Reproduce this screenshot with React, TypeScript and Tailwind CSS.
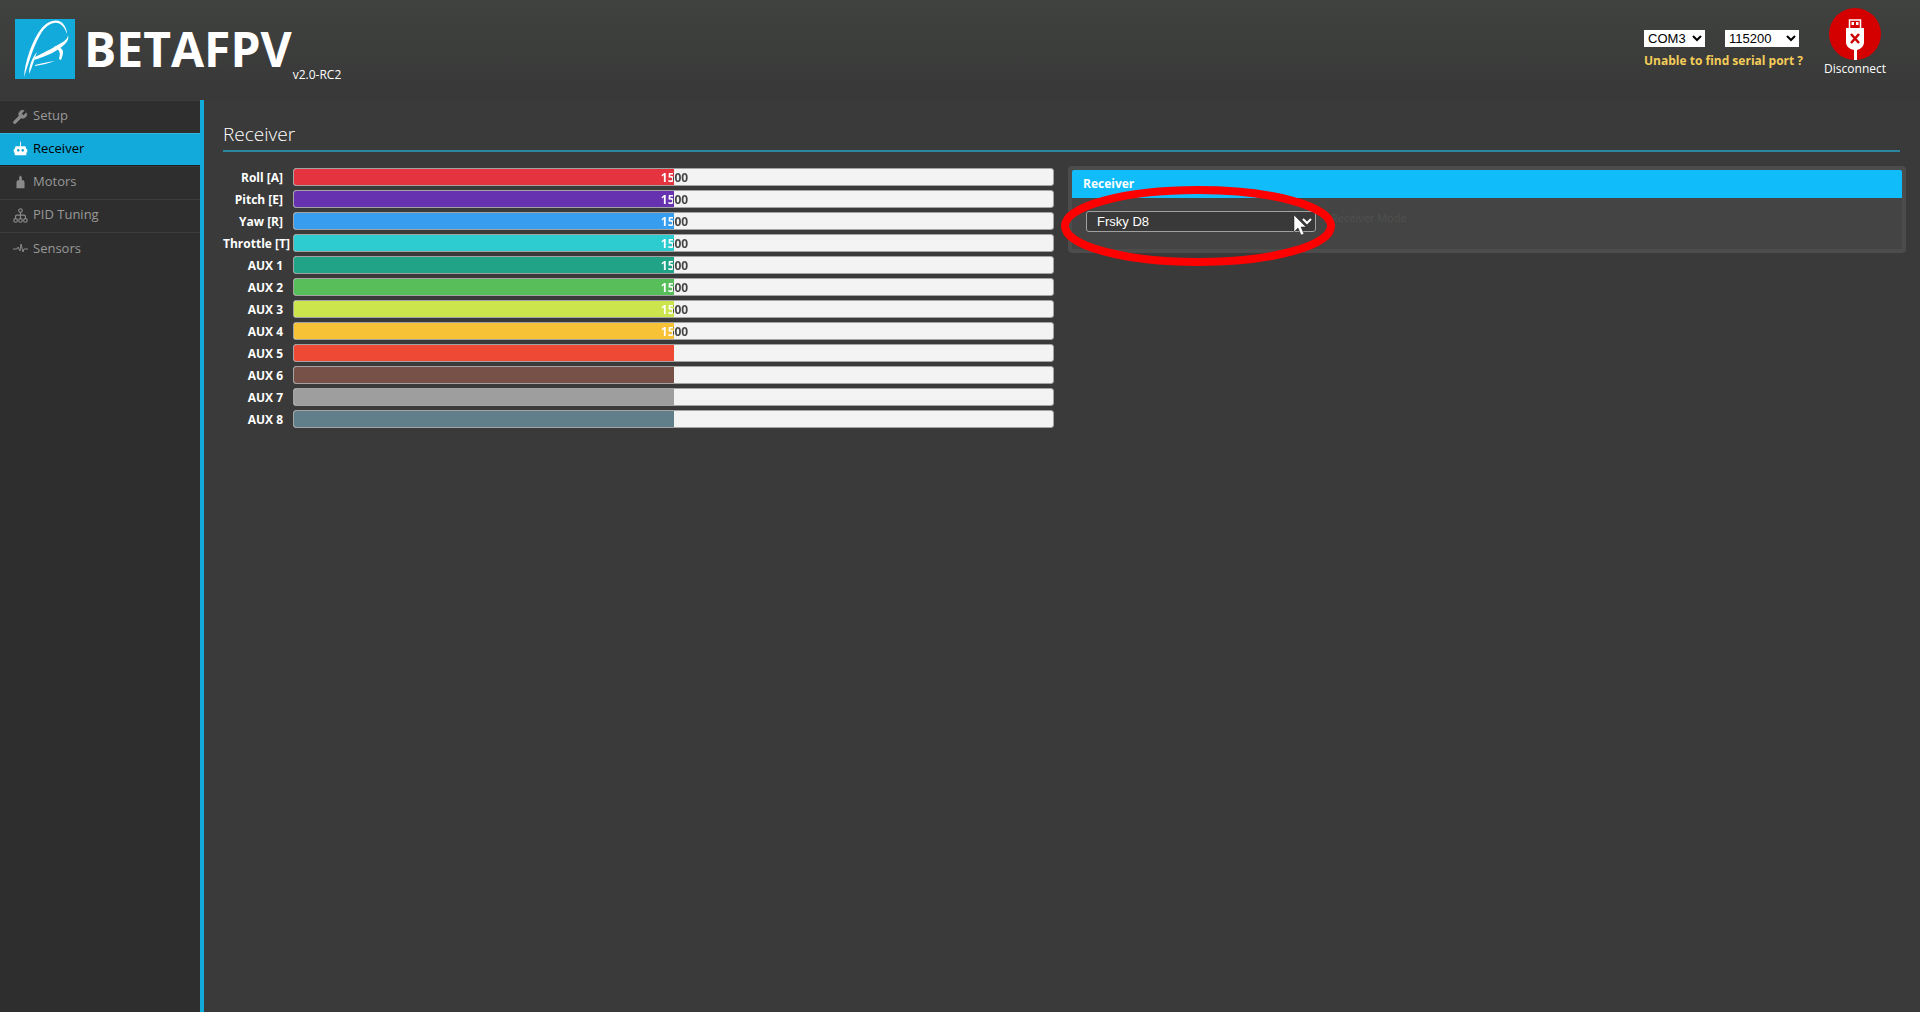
import type { ReactNode } from 'react'
import { Wrench } from 'lucide-react'

type TabProps = {
    label: string
    icon: ReactNode
    active?: boolean
}

const channels = [
    { name: 'Roll [A]', color: 'bg-[#e5343f]', value: 1500 },
    { name: 'Pitch [E]', color: 'bg-[#6732b0]', value: 1500 },
    { name: 'Yaw [R]', color: 'bg-[#379dee]', value: 1500 },
    { name: 'Throttle [T]', color: 'bg-[#2cccd0]', value: 1500 },
    { name: 'AUX 1', color: 'bg-[#20a386]', value: 1500 },
    { name: 'AUX 2', color: 'bg-[#58be59]', value: 1500 },
    { name: 'AUX 3', color: 'bg-[#cce54c]', value: 1500 },
    { name: 'AUX 4', color: 'bg-[#f7c235]', value: 1500 },
    { name: 'AUX 5', color: 'bg-[#ee4934]' },
    { name: 'AUX 6', color: 'bg-[#775147]' },
    { name: 'AUX 7', color: 'bg-[#9e9e9e]' },
    { name: 'AUX 8', color: 'bg-[#617f8b]' },
]

function Logo() {
    return (
        <svg className="size-[60px]" viewBox="0 0 60 60" fill="#fff">
            <rect width="60" height="60" fill="#12aadb" />
            <path d="M9 58C10 42 17 22 26 10 34 0 45-1 49 6c2 3 3 6 3 9-3-8-7-12-13-11-6 1-11 6-15 14-6 11-10 25-15 40z" />
            <path d="M53 16c1 3 0 6-3 9-7 7-18 12-31 16l1-3c11-5 21-11 28-15 4-3 5-5 5-7z" />
            <path d="M39 27c6 1 9 3 9 6 0 3-1 5-2 8l-2-1c1-4 1-6 0-8-1-2-3-3-5-5z" />
            <path d="M22 33c-3 7-4 14-8 22 0-8 3-16 8-22z" />
            <path d="M20 46c7-2 13-3 20-4-6 2-13 4-20 5z" />
        </svg>
    )
}

function Usb() {
    return (
        <svg className="size-[52px]" viewBox="0 0 52 52">
            <circle cx="26" cy="26" r="26" fill="#d40000" />
            <path d="M20.500 20v-8h11v8" fill="none" stroke="#fff" strokeWidth="1.500" />
            <path d="M22.500 14h2.500v3h-2.500zM27 14h2.500v3H27zM17 20h18v14c0 4-3 7-7 8v10h-3V42c-5-1-8-4-8-8z" fill="#fff" />
            <path d="M22 26l8 9M30 26l-8 9" stroke="#c00" strokeWidth="2.500" />
        </svg>
    )
}

function Tab({ label, icon, active }: TabProps) {
    return (
        <li>
            <a
                href="#"
                className={
                    active
                        ? 'flex items-center gap-1 h-[33px] pl-3 pb-[2px] border-y border-t-[#33b5df] border-b-[#1f1f1f] bg-[#12aadb] text-black text-[13px]'
                        : 'flex items-center gap-1 h-[33px] pl-3 pb-[2px] border-y border-t-[#3b3b3b] border-b-[#212121] last:border-b-0 text-[#999] text-[13px]'
                }
            >
                <svg className={active ? 'size-[17px] text-white' : 'size-[17px] text-[#8a8a8a]'} viewBox="-1 -1 19 19" fill="currentColor">
                    {icon}
                </svg>
                {label}
            </a>
        </li>
    )
}

function Channel({ name, color, value }: { name: string; color: string; value?: number }) {
    return (
        <li className="flex gap-[10px] h-[18px]">
            <span className="w-[60px] text-right whitespace-nowrap text-xs leading-5 font-bold text-white">{name}</span>
            <div className="relative flex-1 rounded-[3px] border border-[#a3a3a3] bg-[#f3f3f3] overflow-hidden">
                <div className={`w-1/2 h-full ${color}`}></div>
                {value && (
                    <span className="absolute inset-0 pl-[2px] text-center text-xs leading-[18px] font-bold text-transparent bg-clip-text bg-linear-to-r from-white from-50% to-[#444] to-50%">
                        {value}
                    </span>
                )}
            </div>
        </li>
    )
}

export default function App() {
    return (
        <div className="flex flex-col min-h-screen bg-[#393a39] font-['Open_Sans','Noto_Sans',sans-serif]">
            <header className="flex justify-between h-[100px] bg-linear-to-b from-[#404240] to-[#373837]">
                <div className="flex items-start pl-[15px] pt-[19px]">
                    <Logo />
                    <span className="ml-[9px] text-5xl leading-[60px] font-bold text-white">BETAFPV</span>
                    <span className="ml-px mt-12 text-xs text-white">v2.0-RC2</span>
                </div>
                <div className="flex gap-[21px] pr-[34px] pt-2">
                    <div className="pt-[22px]">
                        <div className="flex gap-5">
                            <select aria-label="Port" className="w-[61px] h-[17px] bg-white text-black text-[13px] leading-4 font-['Liberation_Sans',sans-serif]">
                                <option>COM3</option>
                            </select>
                            <select aria-label="Baud rate" className="w-[74px] h-[17px] bg-white text-black text-[13px] leading-4 font-['Liberation_Sans',sans-serif]">
                                <option>115200</option>
                            </select>
                        </div>
                        <a href="#" className="block mt-[6px] text-xs font-bold text-[#f5cd59]">Unable to find serial port ?</a>
                    </div>
                    <button className="flex flex-col items-center gap-px h-fit text-xs text-white">
                        <Usb />
                        Disconnect
                    </button>
                </div>
            </header>

            <div className="flex flex-1">
                <nav className="w-[204px] border-r-4 border-[#12aadb] bg-[#2e2e2e]">
                    <ul>
                        <Tab label="Setup" icon={<Wrench width="18" height="18" x="-1" y="0" fill="currentColor" strokeWidth="1" />} />
                        <Tab
                            label="Receiver"
                            active
                            icon={<path fillRule="evenodd" d="M8 1h1v5h5l1 3h1v4h-1v3H2v-3H1V9h1l1-3h5zM6 9a1.500 1.500 0 100 3 1.500 1.500 0 000-3zm5 0a1.500 1.500 0 100 3 1.500 1.500 0 000-3z" />}
                        />
                        <Tab label="Motors" icon={<path d="M8 1h1l1 2v3h2l1 2v7H4V8l1-2h2V3z" />} />
                        <Tab
                            label="PID Tuning"
                            icon={
                                <g fill="none" stroke="currentColor" strokeWidth="1.300">
                                    <circle cx="8.500" cy="3" r="2" />
                                    <circle cx="3" cy="14" r="2" />
                                    <circle cx="8.500" cy="14" r="2" />
                                    <circle cx="14" cy="14" r="2" />
                                    <path d="M8.500 5v7M3 12V9.500q0-1.500 1.500-1.500h8q1.500 0 1.500 1.500V12" />
                                </g>
                            }
                        />
                        <li>
                            <a href="#" className="flex items-center gap-1 h-8 pl-3 border-t border-[#3b3b3b] text-[#999] text-[13px]">
                                <svg className="size-[17px]" viewBox="0 0 17 17" fill="none" stroke="#8a8a8a">
                                    <path d="M1 9h4l1-2 2 4 1-7 2 8 1-3h4" />
                                </svg>
                                Sensors
                            </a>
                        </li>
                    </ul>
                </nav>

                <main className="flex-1 pl-[19px] pr-[14px] pt-5">
                    <h1 className="mr-[6px] h-8 border-b-2 border-[#2b86a1] text-[19px] leading-7 font-light text-white">Receiver</h1>
                    <div className="grid grid-cols-[831fr_838fr] items-start gap-[14px] pt-[14px]">
                        <ul className="flex flex-col gap-1 pt-[2px]">
                            {channels.map((channel) => (
                                <Channel key={channel.name} {...channel} />
                            ))}
                        </ul>

                        <section className="rounded border-4 border-[#4b4c4b] bg-[#434443]">
                            <h2 className="h-7 pl-[11px] rounded-t-xs bg-[#11bcfb] text-xs leading-7 font-bold text-white">Receiver</h2>
                            <div className="relative flex items-start h-[51px] pl-[14px] pt-[13px]">
                                <select
                                    id="receiver-mode"
                                    className="w-[230px] h-[21px] pl-[6px] rounded-[3px] border border-[#a0a0a0] bg-[#393939] text-white text-[13px] leading-4 font-['Liberation_Sans',sans-serif]"
                                >
                                    <option>Frsky D8</option>
                                </select>
                                <label htmlFor="receiver-mode" className="ml-[15px] text-[11px] leading-[14px] text-[#505150]">Receiver Mode</label>
                                <svg className="absolute -left-3 -top-3 w-[276px] h-20 pointer-events-none" viewBox="0 0 276 80">
                                    <ellipse cx="138" cy="40" rx="133" ry="36" fill="none" stroke="#f00" strokeWidth="8" />
                                    <path d="M234 29v17l4-4 3 7 3-1-3-7h5z" fill="#fff" stroke="#222" strokeWidth="0.500" />
                                </svg>
                            </div>
                        </section>
                    </div>
                </main>
            </div>
        </div>
    )
}
